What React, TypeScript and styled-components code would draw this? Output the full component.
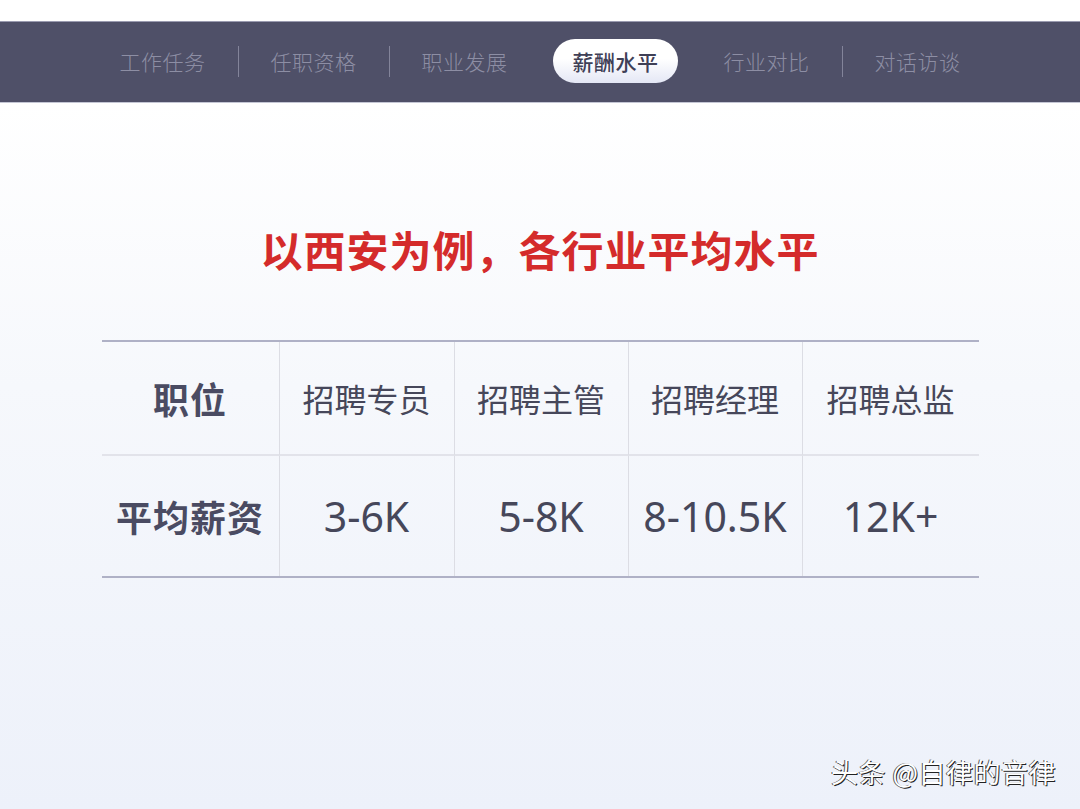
import { Fragment } from "react";
import styled, { createGlobalStyle } from "styled-components";

const GlobalStyle = createGlobalStyle`
  html, body {
    margin: 0;
    padding: 0;
    background: #ffffff;
  }
  body {
    font-family: "Noto Sans CJK SC", "Noto Sans", sans-serif;
  }
`;

const Page = styled.div`
  position: relative;
  width: 1080px;
  height: 809px;
  overflow: hidden;
  display: flex;
  flex-direction: column;
  background: #ffffff;
`;

const TopGap = styled.div`
  height: 21px;
  background: #ffffff;
`;

const NavBar = styled.nav`
  height: 78px;
  padding-bottom: 2px;
  background: #4f5068;
  border-top: 1px solid #9a9bb0;
  border-bottom: 1px solid #c4c6d4;
  display: flex;
  align-items: center;
  justify-content: center;
`;

const NavSlot = styled.div`
  width: 150px;
  display: flex;
  justify-content: center;
  align-items: center;
`;

const NavText = styled.span`
  font-size: 21px;
  font-weight: 300;
  color: #8d8ea4;
  letter-spacing: 0.5px;
`;

const NavPill = styled.span`
  width: 125px;
  height: 44px;
  border-radius: 22px;
  background: linear-gradient(180deg, #ffffff 0%, #ffffff 45%, #e4e7f5 100%);
  color: #3f4056;
  font-size: 21px;
  font-weight: 500;
  display: flex;
  align-items: center;
  justify-content: center;
  letter-spacing: 0.5px;
`;

const NavSep = styled.div<{ $hidden?: boolean }>`
  width: 1px;
  height: 31px;
  background: ${(p) => (p.$hidden ? "transparent" : "#83849a")};
`;

const Main = styled.main`
  flex: 1;
  background: linear-gradient(180deg, #ffffff 0%, #f6f8fc 40%, #edf1fa 100%);
  display: flex;
  flex-direction: column;
  align-items: center;
`;

const Title = styled.h1`
  margin: 125px 0 0;
  font-size: 42px;
  line-height: 42px;
  font-weight: 700;
  color: #d42b2b;
  letter-spacing: 1px;
`;

const Table = styled.div`
  margin-top: 70px;
  width: 877px;
  display: grid;
  grid-template-columns: 177px 175px 174px 174px 177px;
  grid-template-rows: 114px 120px;
  border-top: 2px solid #afb1c6;
  border-bottom: 2px solid #afb1c6;
`;

const Cell = styled.div<{ $first?: boolean; $top?: boolean }>`
  display: flex;
  align-items: center;
  justify-content: center;
  border-left: ${(p) => (p.$first ? "none" : "1px solid #dcdde4")};
  border-bottom: ${(p) => (p.$top ? "2px solid #e2e3ea" : "none")};
  color: #4a4b5e;
`;

const HeadText = styled.span`
  font-size: 36px;
  font-weight: 700;
  color: #4a4b62;
  letter-spacing: 1px;
`;

const RoleText = styled.span`
  font-size: 32px;
  font-weight: 400;
  color: #46475a;
`;

const PayText = styled.span`
  font-family: "Noto Sans", "Noto Sans CJK SC", sans-serif;
  font-size: 41px;
  font-weight: 400;
  color: #46475a;
`;

const Watermark = styled.div`
  position: absolute;
  right: 24px;
  bottom: 21px;
  font-size: 27px;
  line-height: 32px;
  color: #ffffff;
  text-shadow: 1px 1px 0 #222, -1px 0 0 #555;
  letter-spacing: 0.5px;
`;

const tabs = ["工作任务", "任职资格", "职业发展", "薪酬水平", "行业对比", "对话访谈"];
const active = 3;

const roles = ["招聘专员", "招聘主管", "招聘经理", "招聘总监"];
const pays = ["3-6K", "5-8K", "8-10.5K", "12K+"];

export default function App() {
  return (
    <Page>
      <GlobalStyle />
      <TopGap />
      <NavBar>
        {tabs.map((t, i) => (
          <Fragment key={t}>
            {i > 0 && <NavSep $hidden={i === active || i === active + 1} />}
            <NavSlot>
              {i === active ? <NavPill>{t}</NavPill> : <NavText>{t}</NavText>}
            </NavSlot>
          </Fragment>
        ))}
      </NavBar>
      <Main>
        <Title>以西安为例，各行业平均水平</Title>
        <Table>
          <Cell $first $top>
            <HeadText>职位</HeadText>
          </Cell>
          {roles.map((r) => (
            <Cell $top key={r}>
              <RoleText>{r}</RoleText>
            </Cell>
          ))}
          <Cell $first>
            <HeadText>平均薪资</HeadText>
          </Cell>
          {pays.map((p) => (
            <Cell key={p}>
              <PayText>{p}</PayText>
            </Cell>
          ))}
        </Table>
      </Main>
      <Watermark>头条 @自律的音律</Watermark>
    </Page>
  );
}
